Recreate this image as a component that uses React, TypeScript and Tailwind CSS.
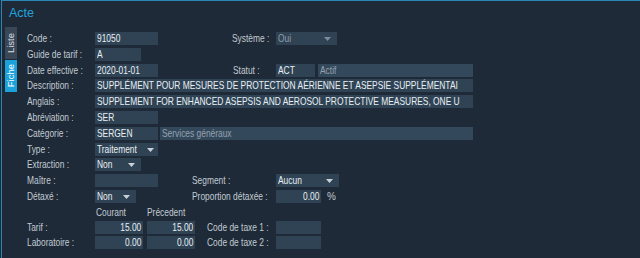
import React from "react";

const FONT = "font-['Liberation_Sans',Arial,sans-serif]";

function T({ children, right }: { children: React.ReactNode; right?: boolean }) {
  return (
    <span className={`inline-block whitespace-nowrap scale-x-[0.8] ${right ? "origin-right" : "origin-left"}`}>
      {children}
    </span>
  );
}

function Caret({ dim }: { dim?: boolean }) {
  return (
    <svg width="7" height="4" viewBox="0 0 7 4" className="shrink-0">
      <polygon points="0,0 7,0 3.5,4" fill={dim ? "#7d8a97" : "#c9d1d9"} />
    </svg>
  );
}

function Label({ children, w }: { children: React.ReactNode; w: string }) {
  return (
    <div className={`${w} shrink-0 text-[#c2cbd3] text-[10.5px] leading-[13px] whitespace-nowrap overflow-visible`}>
      <T>{children}</T>
    </div>
  );
}

function Field({
  w,
  children,
  right,
  dim,
  light,
}: {
  w: string;
  children?: React.ReactNode;
  right?: boolean;
  dim?: boolean;
  light?: boolean;
}) {
  return (
    <div
      className={`${w} h-[13px] shrink-0 overflow-hidden whitespace-nowrap px-[2px] text-[10.5px] leading-[13px] ${
        light ? "bg-[#33485b]" : "bg-[#2f4355]"
      } ${dim ? "text-[#95a2ae]" : "text-[#e9eff3]"} ${right ? "text-right" : ""}`}
    >
      {children !== undefined && <T right={right}>{children}</T>}
    </div>
  );
}

function Select({ w, children, dim }: { w: string; children: React.ReactNode; dim?: boolean }) {
  return (
    <div
      className={`${w} h-[13px] shrink-0 flex items-center justify-between pl-[2px] pr-[6px] bg-[#2f4355] text-[10.5px] leading-[13px] ${
        dim ? "text-[#8f9ca8]" : "text-[#e9eff3]"
      }`}
    >
      <T>{children}</T>
      <Caret dim={dim} />
    </div>
  );
}

export default function App() {
  return (
    <div className={`w-[640px] h-[258px] bg-[#1d2937] ${FONT} overflow-hidden`}>
      <div className="h-full ml-[1px] border-l border-t border-[#2a86b6] bg-[#1e2a38]">
        <div className="h-[26px] pl-[7px] pt-[5px] text-[12.5px] leading-[14px] text-[#23a3dc]">Acte</div>
        <div className="flex">
          <div className="ml-[3px] w-[12px] flex flex-col gap-[1px]">
            <div className="h-[32px] bg-[#3a4756] flex items-center justify-center">
              <span className="[writing-mode:vertical-rl] rotate-180 text-[9.5px] leading-[12px] text-[#d5dce2]">Liste</span>
            </div>
            <div className="h-[32px] bg-[#1ba2dc] flex items-center justify-center">
              <span className="[writing-mode:vertical-rl] rotate-180 text-[9.5px] leading-[12px] text-white">Fiche</span>
            </div>
          </div>
          <div className="ml-[10px] pt-[5px] flex flex-col">
            {/* Code */}
            <div className="flex items-center h-[13px]">
              <Label w="w-[68px]">Code :</Label>
              <Field w="w-[63px]">91050</Field>
              <div className="w-[74px] shrink-0" />
              <Label w="w-[44px]">Système :</Label>
              <Select w="w-[61px]" dim>
                Oui
              </Select>
            </div>
            {/* Guide */}
            <div className="flex items-center h-[13px] mt-[3px]">
              <Label w="w-[68px]">Guide de tarif :</Label>
              <Field w="w-[46px]">A</Field>
            </div>
            {/* Date */}
            <div className="flex items-center h-[13px] mt-[3px]">
              <Label w="w-[68px]">Date effective :</Label>
              <Field w="w-[63px]">2020-01-01</Field>
              <div className="w-[75px] shrink-0" />
              <Label w="w-[43px]">Statut :</Label>
              <Field w="w-[39px]">ACT</Field>
              <div className="w-[3px] shrink-0" />
              <Field w="w-[155px]" dim light>
                Actif
              </Field>
            </div>
            {/* Description */}
            <div className="flex items-center h-[13px] mt-[2px]">
              <Label w="w-[68px]">Description :</Label>
              <Field w="w-[378px]">SUPPLÉMENT POUR MESURES DE PROTECTION AÉRIENNE ET ASEPSIE SUPPLÉMENTAI</Field>
            </div>
            {/* Anglais */}
            <div className="flex items-center h-[13px] mt-[3px]">
              <Label w="w-[68px]">Anglais :</Label>
              <Field w="w-[378px]">SUPPLEMENT FOR ENHANCED ASEPSIS AND AEROSOL PROTECTIVE MEASURES, ONE U</Field>
            </div>
            {/* Abréviation */}
            <div className="flex items-center h-[13px] mt-[3px]">
              <Label w="w-[68px]">Abréviation :</Label>
              <Field w="w-[63px]">SER</Field>
            </div>
            {/* Catégorie */}
            <div className="flex items-center h-[13px] mt-[3px]">
              <Label w="w-[68px]">Catégorie :</Label>
              <Field w="w-[63px]">SERGEN</Field>
              <div className="w-[2px] shrink-0" />
              <Field w="w-[313px]" dim light>
                Services généraux
              </Field>
            </div>
            {/* Type */}
            <div className="flex items-center h-[13px] mt-[3px]">
              <Label w="w-[68px]">Type :</Label>
              <Select w="w-[63px]">Traitement</Select>
            </div>
            {/* Extraction */}
            <div className="flex items-center h-[13px] mt-[2px]">
              <Label w="w-[68px]">Extraction :</Label>
              <Select w="w-[46px]">Non</Select>
            </div>
            {/* Maître */}
            <div className="flex items-center h-[13px] mt-[3px]">
              <Label w="w-[68px]">Maître :</Label>
              <Field w="w-[63px]" />
              <div className="w-[34px] shrink-0" />
              <Label w="w-[84px]">Segment :</Label>
              <Select w="w-[63px]">Aucun</Select>
            </div>
            {/* Détaxé */}
            <div className="flex items-center h-[13px] mt-[3px]">
              <Label w="w-[68px]">Détaxé :</Label>
              <Select w="w-[41px]">Non</Select>
              <div className="w-[56px] shrink-0" />
              <Label w="w-[84px]">Proportion détaxée :</Label>
              <Field w="w-[45px]" right>
                0.00
              </Field>
              <div className="ml-[6px] text-[#c2cbd3] text-[10px] leading-[13px]">%</div>
            </div>
            {/* Header */}
            <div className="flex items-center h-[13px] mt-[3px]">
              <div className="w-[69px] shrink-0" />
              <Label w="w-[51px]">Courant</Label>
              <Label w="w-[50px]">Précedent</Label>
            </div>
            {/* Tarif */}
            <div className="flex items-center h-[13px] mt-[2px]">
              <Label w="w-[68px]">Tarif :</Label>
              <Field w="w-[48px]" right>
                15.00
              </Field>
              <div className="w-[4px] shrink-0" />
              <Field w="w-[48px]" right>
                15.00
              </Field>
              <div className="w-[12px] shrink-0" />
              <Label w="w-[69px]">Code de taxe 1 :</Label>
              <Field w="w-[45px]" />
            </div>
            {/* Laboratoire */}
            <div className="flex items-center h-[13px] mt-[2px]">
              <Label w="w-[68px]">Laboratoire :</Label>
              <Field w="w-[48px]" right>
                0.00
              </Field>
              <div className="w-[4px] shrink-0" />
              <Field w="w-[48px]" right>
                0.00
              </Field>
              <div className="w-[12px] shrink-0" />
              <Label w="w-[69px]">Code de taxe 2 :</Label>
              <Field w="w-[45px]" />
            </div>
          </div>
        </div>
      </div>
    </div>
  );
}
